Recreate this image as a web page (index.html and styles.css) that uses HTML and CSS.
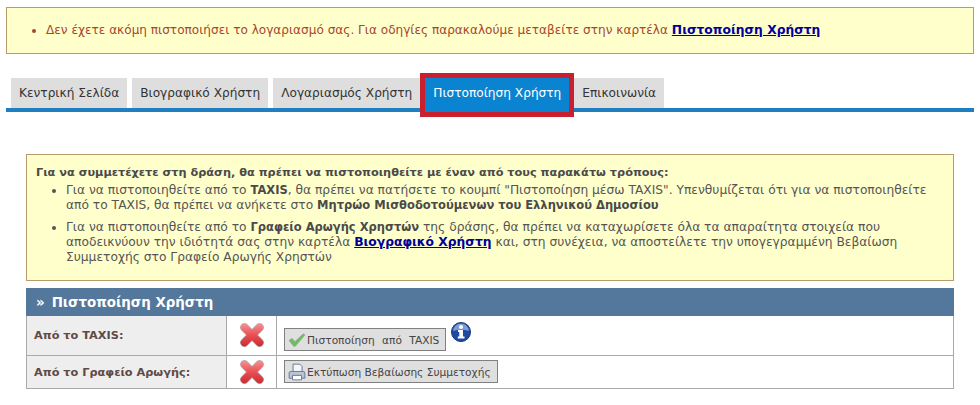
FILE: index.html
```html
<!DOCTYPE html>
<html lang="el">
<head>
<meta charset="utf-8">
<title>Πιστοποίηση Χρήστη</title>
<link rel="stylesheet" href="styles.css">
</head>
<body>
<div class="alert">
  <ul class="alert-list">
    <li>Δεν έχετε ακόμη πιστοποιήσει το λογαριασμό σας. Για οδηγίες παρακαλούμε μεταβείτε στην καρτέλα <a href="#" class="strong-link">Πιστοποίηση Χρήστη</a></li>
  </ul>
</div>
<nav class="tabs">
  <a href="#" class="tab">Κεντρική Σελίδα</a>
  <a href="#" class="tab">Βιογραφικό Χρήστη</a>
  <a href="#" class="tab">Λογαριασμός Χρήστη</a>
  <a href="#" class="tab tab-active">Πιστοποίηση Χρήστη</a>
  <a href="#" class="tab">Επικοινωνία</a>
</nav>
<main class="content">
  <section class="info">
    <p class="info-title">Για να συμμετέχετε στη δράση, θα πρέπει να πιστοποιηθείτε με έναν από τους παρακάτω τρόπους:</p>
    <ul class="info-list">
      <li>Για να πιστοποιηθείτε από το <b>TAXIS</b>, θα πρέπει να πατήσετε το κουμπί "Πιστοποίηση μέσω TAXIS". Υπενθυμίζεται ότι για να πιστοποιηθείτε<br>από το TAXIS, θα πρέπει να ανήκετε στο <b>Μητρώο Μισθοδοτούμενων του Ελληνικού Δημοσίου</b></li>
      <li>Για να πιστοποιηθείτε από το <b>Γραφείο Αρωγής Χρηστών</b> της δράσης, θα πρέπει να καταχωρίσετε όλα τα απαραίτητα στοιχεία που<br>αποδεικνύουν την ιδιότητά σας στην καρτέλα <a href="#" class="strong-link">Βιογραφικό Χρήστη</a> και, στη συνέχεια, να αποστείλετε την υπογεγραμμένη Βεβαίωση<br>Συμμετοχής στο Γραφείο Αρωγής Χρηστών</li>
    </ul>
  </section>
  <section class="panel">
    <h2 class="panel-head"><span class="head-mark">»</span>Πιστοποίηση Χρήστη</h2>
    <div class="row row-a">
      <div class="cell-label">Από το TAXIS:</div>
      <div class="cell-icon">
        <svg class="x-icon" viewBox="0 0 24 24"><use href="#x"/></svg>
      </div>
      <div class="cell-action">
        <button class="btn btn-taxis">
          <svg class="btn-icon" viewBox="0 0 16 16"><path d="M1 8.500l2.500-2 2.700 3L13.500 2.500l1.500 1-8.500 10h-1.500z" fill="#6cc05c" stroke="#8ea88e" stroke-width=".7"/></svg>Πιστοποίηση από TAXIS</button>
        <svg class="info-icon" viewBox="0 0 20 20">
          <circle cx="10" cy="10" r="9.500" fill="#1f4aa0" stroke="#16357a"/>
          <path d="M2 9a8 7.500 0 0 1 16 0a14 6 0 0 0-16 0z" fill="#7f9bd8"/>
          <circle cx="10" cy="5" r="2" fill="#fff"/>
          <path d="M7 8h5v6.500h1.500V16.500H6.800v-2h1.500v-4.500H7z" fill="#fff"/>
        </svg>
      </div>
    </div>
    <div class="row row-b">
      <div class="cell-label">Από το Γραφείο Αρωγής:</div>
      <div class="cell-icon">
        <svg class="x-icon" viewBox="0 0 24 24"><use href="#x"/></svg>
      </div>
      <div class="cell-action">
        <button class="btn btn-print">
          <svg class="btn-icon" viewBox="0 0 16 16">
            <path d="M4.500 1h6l2 2v6h-8z" fill="#f4f6fa" stroke="#5d7291" stroke-width=".8"/>
            <path d="M2.500 7.500h11a1.500 1.500 0 0 1 1.500 1.500v4.500h-14v-4.500a1.500 1.500 0 0 1 1.500-1.500z" fill="#b9c4d4" stroke="#5d7291" stroke-width=".8"/>
            <path d="M4 11h8v4H4z" fill="#fff" stroke="#5d7291" stroke-width=".8"/>
          </svg>Εκτύπωση Βεβαίωσης Συμμετοχής</button>
      </div>
    </div>
  </section>
</main>
<svg class="defs" aria-hidden="true"><defs>
  <linearGradient id="xg" gradientUnits="userSpaceOnUse" x1="0" y1="2" x2="0" y2="22"><stop offset="0" stop-color="#f58e90"/><stop offset=".5" stop-color="#ea4f52"/><stop offset="1" stop-color="#c92f33"/></linearGradient>
  <g id="x" fill="none" stroke-linecap="round">
    <path d="M5 5L19 19M19 5L5 19" stroke="#b4bcc4" stroke-width="8"/>
    <path d="M5 5L19 19M19 5L5 19" stroke="url(#xg)" stroke-width="7"/>
  </g>
</defs></svg>
</body>
</html>
```
FILE: styles.css
```css
* { box-sizing: border-box; }
html, body { margin: 0; padding: 0; background: #fff; }
body {
  width: 980px; height: 405px; overflow: hidden;
  font-family: "DejaVu Sans", Verdana, sans-serif;
  font-size: 12.25px; line-height: 15px; color: #555;
  padding: 7px 0 0 6px;
}
.defs { position: absolute; width: 0; height: 0; }
.alert {
  width: 968px; height: 47px;
  background: #ffffcc; border: 1px solid #b99a6b;
  display: flex; align-items: center;
  color: #a8452c; font-size: 12.1px;
}
.alert-list { margin: 0; padding: 0 0 0 39px; }
.strong-link { color: #000099; font-weight: bold; text-decoration: underline; font-size: 12.3px; }
.tabs {
  margin-top: 24px; width: 968px; height: 34px;
  border-bottom: 4px solid #1f7fc0;
  display: flex; align-items: flex-start; padding-left: 5px; gap: 5px;
}
.tab {
  height: 30px; padding: 1px 8px 0; display: flex; align-items: center;
  background: #dedede; color: #333; text-decoration: none; font-size: 12.17px;
}
.tab-active {
  background: #0a84d0; color: #fff; height: 34px; padding-bottom: 4px;
  position: relative;
  outline: 5px solid #c8202f;
}
.content { margin: 42px 0 0 20px; width: 928px; }
.info {
  height: 127px; background: #ffffcc; border: 1px solid #b99a6b;
  padding: 10px 9px 0; color: #555;
}
.info-title { margin: 0; font-weight: bold; color: #4a4a4a; font-size: 11.3px; }
.info-list { margin: 3px 0 0; padding: 0 0 0 30px; }
.info-list li { margin-bottom: 7px; }
.info-list b { color: #4a4a4a; font-size: 11.5px; }
.panel { margin-top: 7px; border-bottom: 1px solid #aaa; }
.panel-head {
  margin: 0; height: 28px; padding: 0 10px;
  background: #54779c; color: #fff;
  font-size: 13.4px; line-height: 29px; font-weight: bold;
}
.head-mark { margin-right: 7px; }
.row {
  display: grid; grid-template-columns: 200px 50px 1fr;
  border-left: 1px solid #aaa; border-right: 1px solid #aaa;
}
.row-a { height: 40px; border-bottom: 1px solid #aaa; }
.row-b { height: 32px; }
.cell-label {
  background: #eeeeee; color: #5f4a44; font-weight: bold;
  display: flex; align-items: center; padding-left: 7px;
  border-right: 1px solid #aaa; font-size: 11.3px;
}
.cell-icon {
  display: flex; align-items: center; justify-content: center;
  border-right: 1px solid #aaa;
}
.x-icon { width: 26px; height: 26px; }
.row-a .x-icon { margin-bottom: 2px; }
.cell-action { display: flex; align-items: flex-start; padding-left: 7px; }
.btn {
  display: inline-flex; align-items: center;
  background: #dfdfdf; border: 1px solid #808080; color: #444;
  font-family: inherit; font-size: 10.6px; height: 23px; border-radius: 0;
  padding: 0 6px 0 3px;
}
.btn-taxis { margin-top: 12px; word-spacing: 4px; }
.btn-print { margin-top: 4px; }
.btn-icon { width: 18px; height: 18px; margin-right: 1px; }
.info-icon { width: 20px; height: 20px; margin: 6px 0 0 5px; }
```
